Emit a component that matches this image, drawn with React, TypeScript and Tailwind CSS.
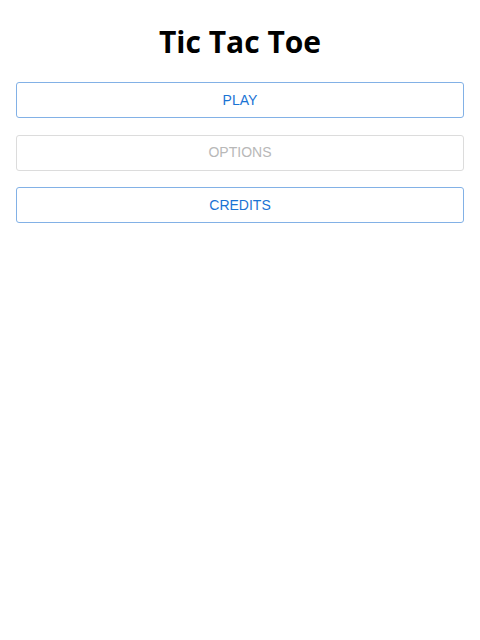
export default function App() {
  return (
    <main className="min-h-screen bg-white px-4 pt-[22px]">
      <h1 className="text-center text-[30px] leading-[40px] font-bold text-black font-['Open_Sans',sans-serif]">
        Tic Tac Toe
      </h1>

      <div className="mt-5 flex flex-col gap-[16.5px] font-['Liberation_Sans',Arial,sans-serif]">
        <button className="h-9 w-full rounded-[3px] border border-[#82b1e6] bg-white text-[14px] text-[#1a73d4]">
          PLAY
        </button>
        <button
          disabled
          className="h-9 w-full rounded-[3px] border border-[#dcdcdc] bg-white text-[14px] text-[#b8b8b8]"
        >
          OPTIONS
        </button>
        <button className="h-9 w-full rounded-[3px] border border-[#82b1e6] bg-white text-[14px] text-[#1a73d4]">
          CREDITS
        </button>
      </div>
    </main>
  )
}
